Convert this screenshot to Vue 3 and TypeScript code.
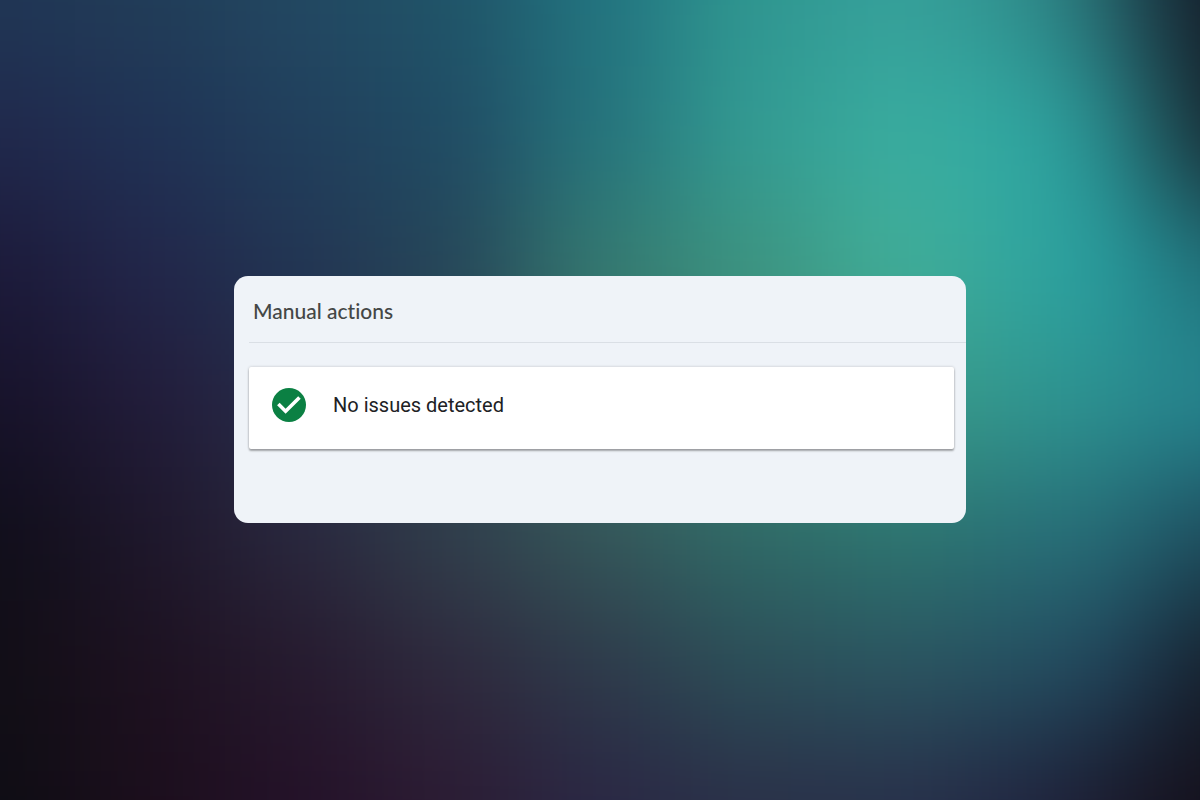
<script setup lang="ts">
interface Cell {
  x: number
  y: number
  width: number
  height: number
  fill: string
}

const columns: number[] = [0, 150, 300, 450, 600, 750, 900, 1050, 1125, 1200]
const rows: number[] = [0, 133, 267, 400, 533, 667, 800]

const palette: string[][] = [
  ['#203655', '#213d58', '#224862', '#205468', '#22737f', '#2f9690', '#36a09a', '#2f8d8c', '#22525e', '#131824'],
  ['#20284c', '#203255', '#213f5c', '#204b64', '#25737c', '#339b93', '#39ada0', '#2ea7a2', '#278288', '#16222b'],
  ['#1c1a3a', '#22264a', '#223553', '#264658', '#357a70', '#3d9480', '#42ae98', '#2fa5a0', '#259a9e', '#206c76'],
  ['#17122a', '#221c3a', '#262c4a', '#2c4152', '#3a6a66', '#3f8876', '#3a9a88', '#309690', '#2a8e90', '#258590'],
  ['#100e1a', '#1e172b', '#2a283e', '#313f4c', '#35575a', '#2f6a67', '#2d7570', '#287078', '#256a76', '#1d4a5c'],
  ['#120e16', '#1d1120', '#261a2e', '#2e293d', '#2e3a4a', '#2c4e58', '#2b5460', '#244e60', '#20405a', '#151c28'],
  ['#0e0d14', '#1c0e1c', '#241128', '#2c1b33', '#2a2744', '#2a3048', '#28304a', '#20243f', '#191828', '#140f1a'],
]

// Each swatch reaches halfway to its neighbours; the outer ones bleed past the canvas.
const bleed = 200

function span(index: number, centres: number[]): [number, number] {
  const last = centres.length - 1
  const start = index === 0 ? -bleed : (centres[index - 1] + centres[index]) / 2
  const end = index === last ? centres[last] + bleed : (centres[index] + centres[index + 1]) / 2
  return [start, end - start]
}

const cells: Cell[] = palette.flatMap((row, r) =>
  row.map((fill, c) => {
    const [x, width] = span(c, columns)
    const [y, height] = span(r, rows)
    return { x, y, width, height, fill }
  }),
)
</script>

<template>
  <main class="stage">
    <svg class="backdrop" viewBox="0 0 1200 800" preserveAspectRatio="none" aria-hidden="true">
      <defs>
        <filter
          id="soften"
          filterUnits="userSpaceOnUse"
          x="-200"
          y="-200"
          width="1600"
          height="1200"
          color-interpolation-filters="sRGB"
        >
          <feGaussianBlur stdDeviation="56 56" />
        </filter>
      </defs>
      <g filter="url(#soften)" shape-rendering="crispEdges">
        <rect
          v-for="(cell, i) in cells"
          :key="i"
          :x="cell.x"
          :y="cell.y"
          :width="cell.width"
          :height="cell.height"
          :fill="cell.fill"
        />
      </g>
    </svg>

    <section class="panel" aria-labelledby="panel-title">
      <h1 id="panel-title" class="title">Manual actions</h1>
      <div class="card" role="status">
        <svg class="check" viewBox="2 2 20 20" aria-hidden="true">
          <circle cx="12" cy="12" r="10" fill="#0b8043" />
          <path d="M10 17.2l-5-5 1.5-1.5L10 14.2l7.4-7.4L18.9 8.3z" fill="#fff" />
        </svg>
        <p class="message">No issues detected</p>
      </div>
    </section>
  </main>
</template>

<style>
body {
  margin: 0;
}
</style>

<style scoped>
.stage {
  position: relative;
  display: flex;
  align-items: center;
  justify-content: center;
  min-height: 100vh;
  padding-bottom: 1px;
  box-sizing: border-box;
  overflow: hidden;
  background: #22303f;
  font-family: Roboto, "Liberation Sans", sans-serif;
}

.backdrop {
  position: absolute;
  inset: 0;
  width: 100%;
  height: 100%;
}

.panel {
  position: relative;
  box-sizing: border-box;
  width: 61%;
  padding: 0 0 74px 15px;
  border-radius: 14px;
  background: #eff3f8;
}

.title {
  margin: 0;
  padding: 20px 4px 16px;
  border-bottom: 1px solid #dadfe5;
  color: #444746;
  font-family: Lato, Roboto, sans-serif;
  font-size: 21px;
  font-weight: 500;
  font-variant-ligatures: none;
  line-height: 30px;
}

.card {
  display: flex;
  align-items: center;
  gap: 27px;
  margin: 24px 12px 0 0;
  padding: 21px 23px 27px;
  border-radius: 2px;
  background: #fff;
  box-shadow: 0 2px 2px rgba(0, 0, 0, 0.3), 0 0 3px rgba(0, 0, 0, 0.2);
}

.check {
  flex: none;
  width: 34px;
  height: 34px;
}

.message {
  margin: 0;
  color: #202124;
  font-size: 20px;
  font-weight: 400;
  line-height: 32px;
}
</style>
